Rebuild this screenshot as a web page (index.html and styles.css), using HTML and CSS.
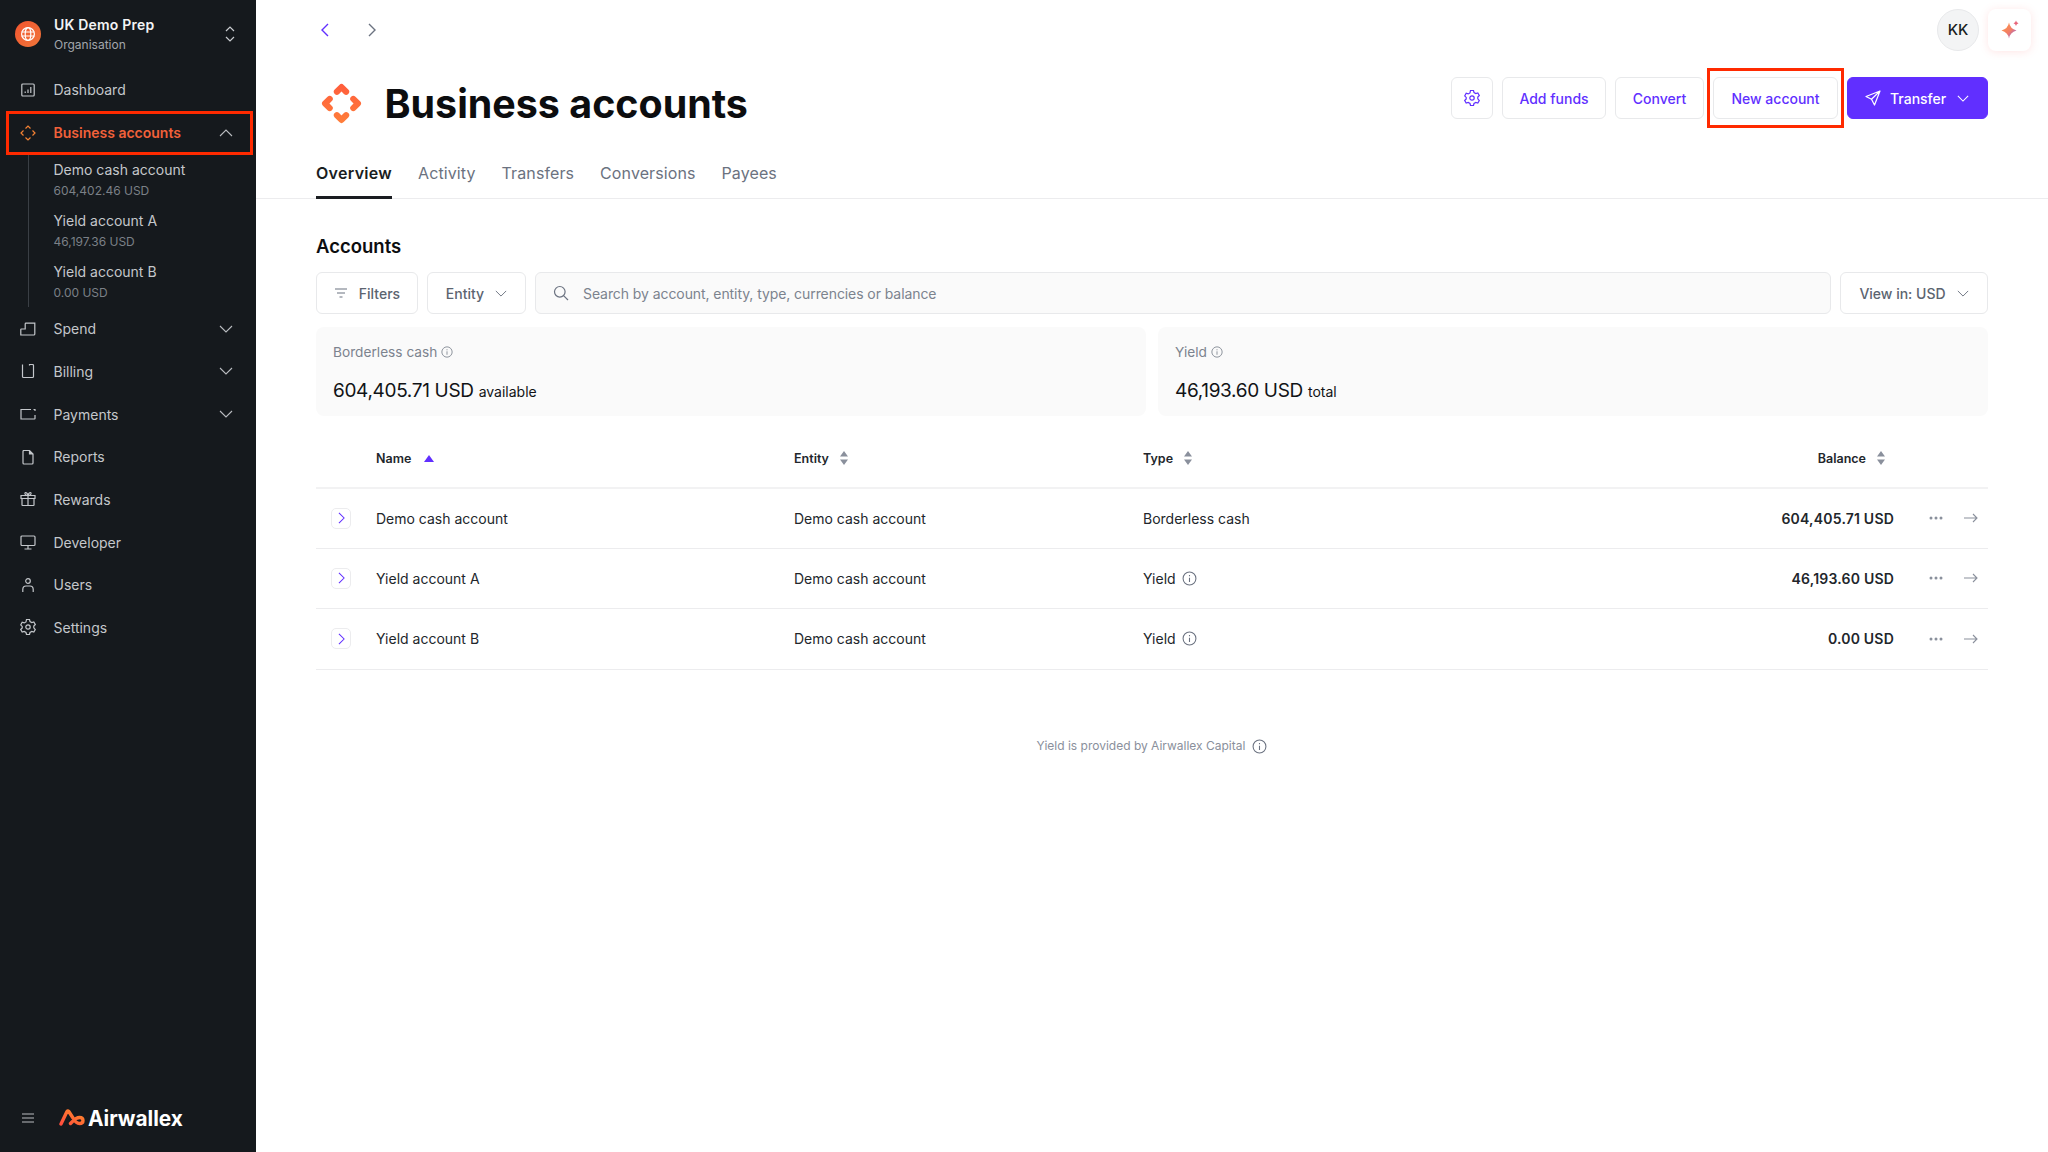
FILE: index.html
```html
<!DOCTYPE html>
<html lang="en">

<head>
  <meta charset="UTF-8">
  <title>Business accounts</title>
  <link rel="stylesheet" href="styles.css">
</head>

<body>
  <aside class="sidebar">
    <div class="org">
      <span class="org-avatar">
        <svg width="16" height="16" viewBox="0 0 16 16" fill="none" stroke="#fff" stroke-width="1.2"><circle cx="8" cy="8" r="6.4"/><ellipse cx="8" cy="8" rx="2.8" ry="6.4"/><path d="M1.6 6h12.8M1.6 10h12.8"/></svg>
      </span>
      <div class="org-text">
        <div class="org-name">UK Demo Prep</div>
        <div class="org-sub">Organisation</div>
      </div>
      <svg class="org-switch" width="12" height="18" viewBox="0 0 12 18" fill="none" stroke="#c9ccd0" stroke-width="1.2"><path d="M2 6l4-4 4 4M2 12l4 4 4-4"/></svg>
    </div>

    <nav class="nav">
      <a class="nav-item">
        <svg class="nav-icon" viewBox="0 0 16 16" fill="none" stroke="currentColor" stroke-width="1.2"><rect x="1.8" y="2" width="12.4" height="12" rx="1"/><path d="M5.2 11V9.500M8 11V7.500M10.800 11V5"/></svg>
        Dashboard
      </a>
      <a class="nav-item is-active is-boxed">
        <svg class="nav-icon" viewBox="0 0 16 16" fill="none" stroke="#f58233" stroke-width="1.2"><path d="M5.500 3.500L8 1l2.500 2.500M12.500 5.500L15 8l-2.500 2.500M10.500 12.500L8 15l-2.500-2.500M3.500 10.500L1 8l2.500-2.500"/></svg>
        Business accounts
        <svg class="nav-chevron" viewBox="0 0 14 8" fill="none" stroke="currentColor" stroke-width="1.1"><path d="M1 7l6-6 6 6"/></svg>
      </a>
      <div class="subnav">
        <a class="sub-item"><span class="sub-name">Demo cash account</span><span class="sub-value">604,402.46 USD</span></a>
        <a class="sub-item"><span class="sub-name">Yield account A</span><span class="sub-value">46,197.36 USD</span></a>
        <a class="sub-item"><span class="sub-name">Yield account B</span><span class="sub-value">0.00 USD</span></a>
      </div>
      <a class="nav-item">
        <svg class="nav-icon" viewBox="0 0 16 16" fill="none" stroke="currentColor" stroke-width="1.2"><path d="M.8 14V8.500q0-.5.5-.5h3.900V3q0-.8.8-.8h8.800V13q0 1-1 1z"/></svg>
        Spend
        <svg class="nav-chevron" viewBox="0 0 14 8" fill="none" stroke="currentColor" stroke-width="1.1"><path d="M1 1l6 6 6-6"/></svg>
      </a>
      <a class="nav-item">
        <svg class="nav-icon" viewBox="0 0 16 16" fill="none" stroke="currentColor" stroke-width="1.2"><path d="M2.500 1.500v12q0 1 1 1h9q1 0 1-1v-11q0-1-1-1h-3v1"/></svg>
        Billing
        <svg class="nav-chevron" viewBox="0 0 14 8" fill="none" stroke="currentColor" stroke-width="1.1"><path d="M1 1l6 6 6-6"/></svg>
      </a>
      <a class="nav-item">
        <svg class="nav-icon" viewBox="0 0 16 16" fill="none" stroke="currentColor" stroke-width="1.2"><path d="M15 5V3.500h-1.500M11 3.500H1v9.500h13.500q.5 0 .5-.5V9"/></svg>
        Payments
        <svg class="nav-chevron" viewBox="0 0 14 8" fill="none" stroke="currentColor" stroke-width="1.1"><path d="M1 1l6 6 6-6"/></svg>
      </a>
      <a class="nav-item">
        <svg class="nav-icon" viewBox="0 0 16 16" fill="none" stroke="currentColor" stroke-width="1.2"><path d="M3 1.500h6.500l3.500 3.500v9q0 1-1 1H4q-1 0-1-1V2.500q0-1 1-1z"/><path d="M9.500 1.500V5H13" fill="currentColor"/></svg>
        Reports
      </a>
      <a class="nav-item">
        <svg class="nav-icon" viewBox="0 0 16 16" fill="none" stroke="currentColor" stroke-width="1.2"><path d="M1 4.500h14v3H1zM2 7.500v6.500q0 .5.500.5h11q.5 0 .5-.5V7.500M8 4.500v10M8 4.500C6 4.500 4.500 3.500 5 2s3 .5 3 2.500zM8 4.500c2 0 3.500-1 3-2.500s-3 .5-3 2.500z"/></svg>
        Rewards
      </a>
      <a class="nav-item">
        <svg class="nav-icon" viewBox="0 0 16 16" fill="none" stroke="currentColor" stroke-width="1.2"><rect x="1" y="2" width="14" height="9.500" rx="1"/><path d="M8 11.500V15M4.500 15h7"/></svg>
        Developer
      </a>
      <a class="nav-item">
        <svg class="nav-icon" viewBox="0 0 16 16" fill="none" stroke="currentColor" stroke-width="1.2"><circle cx="8" cy="4" r="2.300"/><path d="M2.800 15v-2.500Q2.800 9 6 9h4q3.200 0 3.200 3.500V15"/></svg>
        Users
      </a>
      <a class="nav-item">
        <svg class="nav-icon" viewBox="0 0 16 16" fill="none" stroke="currentColor" stroke-width="1.2"><path d="M6.500 1h3l.5 2 1.800 1 2-.6 1.500 2.600-1.500 1.500v1.800L15.300 11l-1.500 2.600-2-.6-1.800 1-.5 2h-3l-.5-2-1.800-1-2 .6L.7 11l1.500-1.500V7.900L.7 6.400l1.500-2.600 2 .6L6 3.400z" transform="translate(0 -.5)"/><circle cx="8" cy="8" r="2.200"/></svg>
        Settings
      </a>
    </nav>

    <div class="sidebar-foot">
      <svg class="menu-icon" viewBox="0 0 12 10" fill="none" stroke="#b9bcc0" stroke-width="1.2"><path d="M0 1h12M0 5h12M0 9h12"/></svg>
      <svg class="brand-mark" viewBox="0 0 26 18" fill="none" stroke="url(#brand)" stroke-width="3.400" stroke-linejoin="round" stroke-linecap="round"><defs><linearGradient id="brand" x1="0" y1="1" x2="1" y2="0"><stop offset="0" stop-color="#ff4d3d"/><stop offset="1" stop-color="#ff8a2a"/></linearGradient></defs><path d="M2 15L8 2.500q.8-1 1.800 0L14 9q3 5.500 6.500 5.500 3.500 0 3.500-3 0-3-3.500-3-3.500 0-7 4l-2 2"/></svg>
      <span class="brand-name">Airwallex</span>
    </div>
  </aside>

  <main class="main">
    <div class="topbar">
      <div class="history">
        <svg viewBox="0 0 10 14" fill="none" stroke="#612fff" stroke-width="1.400"><path d="M8 1L2 7l6 6"/></svg>
        <svg viewBox="0 0 10 14" fill="none" stroke="#6b7280" stroke-width="1.400"><path d="M2 1l6 6-6 6"/></svg>
      </div>
      <div class="top-right">
        <span class="user-badge">KK</span>
        <span class="ai-button">
          <svg width="20" height="20" viewBox="0 0 20 20"><defs><linearGradient id="spark" x1="0" y1="0" x2="1" y2="1"><stop offset="0" stop-color="#ff9a3c"/><stop offset=".55" stop-color="#f27d68"/><stop offset="1" stop-color="#7a5cff"/></linearGradient></defs><path fill="url(#spark)" d="M9 2.500q1 6.200 7.500 8-6.500 1.800-7.500 8-1-6.200-7.500-8 6.500-1.800 7.500-8z"/><path fill="#e8647a" d="M16 .5q.4 2.200 2.500 2.700-2.100.5-2.500 2.800-.4-2.300-2.500-2.800 2.100-.5 2.500-2.700z"/></svg>
        </span>
      </div>
    </div>

    <header class="page-head">
      <svg class="page-icon" viewBox="0 0 40 40" fill="none" stroke="url(#head)" stroke-width="6" stroke-linejoin="round" stroke-linecap="round"><defs><linearGradient id="head" x1="0" y1="0" x2="0" y2="40" gradientUnits="userSpaceOnUse"><stop offset="0" stop-color="#ff5c3c"/><stop offset="1" stop-color="#ff7f3a"/></linearGradient></defs><path d="M15.500 8.500L20 4l4.500 4.500"/><path d="M15.500 31.500L20 36l4.500-4.500"/><path d="M8.500 15.500L4 20l4.500 4.500"/><path d="M31.500 15.500L36 20l-4.500 4.500"/></svg>
      <h1 class="page-title">Business accounts</h1>
      <div class="page-actions">
        <button class="btn btn-icon"><svg width="16" height="16" viewBox="0 0 16 16" fill="none" stroke="currentColor" stroke-width="1.200"><path d="M6.500 1h3l.5 2 1.800 1 2-.6 1.500 2.600-1.500 1.500v1.800L15.300 11l-1.500 2.600-2-.6-1.800 1-.5 2h-3l-.5-2-1.800-1-2 .6L.7 11l1.500-1.500V7.900L.7 6.400l1.500-2.600 2 .6L6 3.400z" transform="translate(0 -.5)"/><circle cx="8" cy="8" r="2.200"/></svg></button>
        <button class="btn btn-funds">Add funds</button>
        <button class="btn btn-convert">Convert</button>
        <button class="btn btn-new is-boxed">New account</button>
        <button class="btn btn-primary">
          <svg width="16" height="16" viewBox="0 0 16 16" fill="none" stroke="#fff" stroke-width="1.200" stroke-linejoin="round"><path d="M15 1L1 6.500l5.500 2.800L9.500 15zM15 1L6.500 9.300"/></svg>
          Transfer
          <svg class="btn-chevron" viewBox="0 0 14 8" fill="none" stroke="#fff" stroke-width="1.200"><path d="M1 1l6 6 6-6"/></svg>
        </button>
      </div>
    </header>

    <div class="tabs">
      <a class="tab is-current">Overview</a>
      <a class="tab">Activity</a>
      <a class="tab">Transfers</a>
      <a class="tab">Conversions</a>
      <a class="tab">Payees</a>
    </div>

    <section class="content">
      <h2 class="section-title">Accounts</h2>

      <div class="filters">
        <button class="filter filter-btn">
          <svg width="14" height="12" viewBox="0 0 14 12" fill="none" stroke="#6b7280" stroke-width="1.200"><path d="M1 2h12M3 6h8M5.500 10h3"/></svg>
          Filters
        </button>
        <button class="filter entity-btn">
          Entity
          <svg class="btn-chevron" viewBox="0 0 14 8" fill="none" stroke="#6b7280" stroke-width="1.100"><path d="M1 1l6 6 6-6"/></svg>
        </button>
        <div class="search">
          <svg width="16" height="16" viewBox="0 0 16 16" fill="none" stroke="#6b7280" stroke-width="1.200"><circle cx="6.800" cy="6.800" r="5.300"/><path d="M10.800 10.800L15 15"/></svg>
          Search by account, entity, type, currencies or balance
        </div>
        <button class="filter view-btn">
          View in: USD
          <svg class="btn-chevron" viewBox="0 0 14 8" fill="none" stroke="#6b7280" stroke-width="1.100"><path d="M1 1l6 6 6-6"/></svg>
        </button>
      </div>

      <div class="summary">
        <div class="summary-card">
          <div class="summary-label">Borderless cash
            <svg class="info" viewBox="0 0 14 14" fill="none" stroke="currentColor" stroke-width="1"><circle cx="7" cy="7" r="6"/><path d="M7 6.200v4M7 3.800v1.200"/></svg>
          </div>
          <div class="summary-value">604,405.71 USD <small>available</small></div>
        </div>
        <div class="summary-card">
          <div class="summary-label">Yield
            <svg class="info" viewBox="0 0 14 14" fill="none" stroke="currentColor" stroke-width="1"><circle cx="7" cy="7" r="6"/><path d="M7 6.200v4M7 3.800v1.200"/></svg>
          </div>
          <div class="summary-value">46,193.60 USD <small>total</small></div>
        </div>
      </div>

      <div class="table">
        <div class="row row-head">
          <span></span>
          <span class="th">Name <svg class="sort-up" viewBox="0 0 10 7"><path fill="#612fff" d="M5 0l5 7H0z"/></svg></span>
          <span class="th">Entity <svg class="sort" viewBox="0 0 8 14"><path fill="#8a909c" d="M4 0l4 5.500H0zM4 14L0 8.500h8z"/></svg></span>
          <span class="th">Type <svg class="sort" viewBox="0 0 8 14"><path fill="#8a909c" d="M4 0l4 5.500H0zM4 14L0 8.500h8z"/></svg></span>
          <span class="th th-balance">Balance <svg class="sort" viewBox="0 0 8 14"><path fill="#8a909c" d="M4 0l4 5.500H0zM4 14L0 8.500h8z"/></svg></span>
        </div>

        <div class="row">
          <span class="expand"><svg viewBox="0 0 8 14" fill="none" stroke="#612fff" stroke-width="1.200"><path d="M1 1l6 6-6 6"/></svg></span>
          <span>Demo cash account</span>
          <span>Demo cash account</span>
          <span>Borderless cash</span>
          <span class="balance">604,405.71 USD</span>
          <span class="row-actions">
            <svg class="dots" viewBox="0 0 14 4"><circle cx="2" cy="2" r="1.500"/><circle cx="7" cy="2" r="1.500"/><circle cx="12" cy="2" r="1.500"/></svg>
            <svg class="arrow" viewBox="0 0 14 10" fill="none" stroke="#8a909c" stroke-width="1.100"><path d="M0 5h13M9 1l4 4-4 4"/></svg>
          </span>
        </div>

        <div class="row">
          <span class="expand"><svg viewBox="0 0 8 14" fill="none" stroke="#612fff" stroke-width="1.200"><path d="M1 1l6 6-6 6"/></svg></span>
          <span>Yield account A</span>
          <span>Demo cash account</span>
          <span class="cell-info">Yield <svg class="info-lg" viewBox="0 0 14 14" fill="none" stroke="currentColor" stroke-width="1"><circle cx="7" cy="7" r="6"/><path d="M7 6.200v4M7 3.800v1.200"/></svg></span>
          <span class="balance">46,193.60 USD</span>
          <span class="row-actions">
            <svg class="dots" viewBox="0 0 14 4"><circle cx="2" cy="2" r="1.500"/><circle cx="7" cy="2" r="1.500"/><circle cx="12" cy="2" r="1.500"/></svg>
            <svg class="arrow" viewBox="0 0 14 10" fill="none" stroke="#8a909c" stroke-width="1.100"><path d="M0 5h13M9 1l4 4-4 4"/></svg>
          </span>
        </div>

        <div class="row">
          <span class="expand"><svg viewBox="0 0 8 14" fill="none" stroke="#612fff" stroke-width="1.200"><path d="M1 1l6 6-6 6"/></svg></span>
          <span>Yield account B</span>
          <span>Demo cash account</span>
          <span class="cell-info">Yield <svg class="info-lg" viewBox="0 0 14 14" fill="none" stroke="currentColor" stroke-width="1"><circle cx="7" cy="7" r="6"/><path d="M7 6.200v4M7 3.800v1.200"/></svg></span>
          <span class="balance">0.00 USD</span>
          <span class="row-actions">
            <svg class="dots" viewBox="0 0 14 4"><circle cx="2" cy="2" r="1.500"/><circle cx="7" cy="2" r="1.500"/><circle cx="12" cy="2" r="1.500"/></svg>
            <svg class="arrow" viewBox="0 0 14 10" fill="none" stroke="#8a909c" stroke-width="1.100"><path d="M0 5h13M9 1l4 4-4 4"/></svg>
          </span>
        </div>
      </div>

      <p class="note">Yield is provided by Airwallex Capital
        <svg class="info-lg" viewBox="0 0 14 14" fill="none" stroke="#6b7280" stroke-width="1"><circle cx="7" cy="7" r="6"/><path d="M7 6.200v4M7 3.800v1.200"/></svg>
      </p>
    </section>
  </main>
</body>

</html>
```

FILE: styles.css
```css
/* page */
* {
  box-sizing: border-box;
}

body {
  margin: 0;
  height: 100vh;
  display: flex;
  overflow: hidden;
  background-color: #fff;
  color: #1a1d21;
  font-family: Inter, "Liberation Sans", sans-serif;
  font-size: 14px;
}

/* sidebar */
.sidebar {
  width: 256px;
  flex: none;
  display: flex;
  flex-direction: column;
  background-color: #15191d;
  color: #c4c7cb;
}

.org {
  height: 68.67px;
  display: flex;
  align-items: center;
  padding-left: 15px;
  padding-right: 20px;
}

.org-avatar {
  width: 26px;
  height: 26px;
  border-radius: 50%;
  flex: none;
  display: flex;
  align-items: center;
  justify-content: center;
  background: linear-gradient(135deg, #f2552f, #f0763a);
}

.org-text {
  margin-left: 13px;
  padding-top: 2px;
  flex: 1;
}

.org-name {
  color: #f2f3f4;
  font-weight: 600;
  line-height: 20px;
  letter-spacing: 0.2px;
}

.org-sub {
  color: #a2a6ab;
  font-size: 12px;
  line-height: 20px;
}

.nav-item {
  position: relative;
  height: 42.67px;
  display: flex;
  align-items: center;
  padding-left: 20px;
  padding-right: 23px;
}

.nav-icon {
  width: 16px;
  height: 16px;
  margin-right: 17.5px;
  flex: none;
}

.nav-chevron {
  width: 14px;
  height: 8px;
  margin-left: auto;
  color: #b9bcc0;
}

.is-active {
  color: #f2613a;
  font-weight: 600;
}

.is-boxed::after {
  content: "";
  position: absolute;
  top: 0;
  right: 3px;
  bottom: -1px;
  left: 6px;
  border: 3px solid #ff2a00;
}

.subnav {
  height: 153.5px;
  margin-left: 28px;
  padding-left: 24.5px;
  border-left: 1px solid #3a3f45;
}

.sub-item {
  height: 51px;
  padding-top: 2px;
  display: flex;
  flex-direction: column;
  justify-content: center;
}

.sub-name {
  line-height: 20px;
}

.sub-value {
  font-size: 12px;
  line-height: 21px;
  color: #7b8087;
}

.sidebar-foot {
  margin-top: auto;
  height: 68px;
  display: flex;
  align-items: center;
  padding-left: 22px;
}

.menu-icon {
  width: 12px;
  height: 10px;
  margin-right: 25px;
}

.brand-mark {
  width: 26px;
  height: 18px;
  margin-right: 3px;
}

.brand-name {
  color: #fff;
  font-size: 20.8px;
  font-weight: 700;
}

/* top area */
.main {
  flex: 1;
  min-width: 0;
}

.topbar {
  height: 59px;
  display: flex;
  align-items: center;
  justify-content: space-between;
  padding-left: 64px;
  padding-right: 17px;
}

.history {
  display: flex;
  gap: 37px;
}

.history svg {
  width: 10px;
  height: 14px;
}

.top-right {
  display: flex;
  gap: 9px;
}

.user-badge {
  width: 42px;
  height: 42px;
  border-radius: 50%;
  display: flex;
  align-items: center;
  justify-content: center;
  background-color: #f3f4f5;
  border: 1px solid #e8e9eb;
  font-size: 15px;
  font-weight: 500;
}

.ai-button {
  width: 43px;
  height: 42px;
  border-radius: 8px;
  display: flex;
  align-items: center;
  justify-content: center;
  background-color: #fff;
  box-shadow: 0 1px 8px rgba(255, 110, 110, 0.18);
}

.page-head {
  height: 66px;
  display: flex;
  align-items: center;
  padding-left: 65px;
  padding-right: 60px;
}

.page-icon {
  width: 41px;
  height: 41px;
  margin-right: 22.5px;
  margin-top: 22px;
}

.page-title {
  margin: 24px 0 0;
  font-size: 39.4px;
  font-weight: 700;
  color: #0c0d0f;
}

.page-actions {
  margin-left: auto;
  margin-top: 12px;
  display: flex;
  gap: 9px;
}

.btn {
  position: relative;
  height: 42px;
  display: flex;
  align-items: center;
  justify-content: center;
  border: 1px solid #e8e9eb;
  border-radius: 6px;
  background-color: #fff;
  color: #612fff;
  font-family: inherit;
  font-size: 14px;
  font-weight: 500;
  padding: 0;
}

.btn-icon {
  width: 42px;
}

.btn-funds {
  width: 104px;
}

.btn-convert {
  width: 89px;
}

.btn-new {
  width: 125px;
}

.btn-new::after {
  top: -10px;
  right: -7px;
  bottom: -10px;
  left: -7px;
}

.btn-primary {
  width: 141px;
  justify-content: flex-start;
  padding-left: 17px;
  gap: 9px;
  background-color: #612fff;
  border-color: #612fff;
  color: #fff;
}

.btn-chevron {
  width: 12px;
  height: 7px;
  margin-left: 2px;
}

.tabs {
  height: 74px;
  display: flex;
  gap: 26px;
  padding-left: 60px;
  border-bottom: 1px solid #ececee;
}

.tab {
  height: 74px;
  padding-top: 36px;
  font-size: 16px;
  line-height: 24px;
  color: #6b7280;
  letter-spacing: 0.1px;
}

.is-current {
  color: #1a1d21;
  font-weight: 600;
  letter-spacing: 0.3px;
  border-bottom: 3px solid #1a1d21;
}

/* accounts */
.content {
  padding: 0 60px;
}

.section-title {
  margin: 33px 0 12px;
  font-size: 18.5px;
  line-height: 28px;
  font-weight: 600;
  color: #0c0d0f;
}

.filters {
  display: flex;
  gap: 9px;
  height: 42px;
}

.filter {
  height: 42px;
  display: flex;
  align-items: center;
  justify-content: center;
  padding: 0;
  border: 1px solid #e8e9eb;
  border-radius: 6px;
  background-color: #fff;
  color: #5c6470;
  font-family: inherit;
  font-size: 14px;
  font-weight: 500;
}

.filter-btn {
  width: 102px;
  gap: 11px;
}

.entity-btn {
  width: 99px;
  gap: 9px;
}

.view-btn {
  width: 148px;
  gap: 9px;
}

.search {
  flex: 1;
  display: flex;
  align-items: center;
  gap: 14px;
  padding-left: 17px;
  background-color: #fafafa;
  border: 1px solid #e8e9eb;
  border-radius: 6px;
  color: #7c838e;
  letter-spacing: -0.08px;
}

.summary {
  margin-top: 13px;
  display: grid;
  grid-template-columns: 1fr 1fr;
  gap: 12px;
}

.summary-card {
  height: 89px;
  padding: 15px 17px;
  background-color: #fafafa;
  border-radius: 8px;
}

.summary-label {
  display: flex;
  align-items: center;
  gap: 4px;
  font-size: 13.7px;
  line-height: 20px;
  color: #7c838e;
}

.info {
  width: 12px;
  height: 12px;
}

.summary-value {
  margin-top: 15px;
  font-size: 19px;
  letter-spacing: -0.33px;
  line-height: 28px;
  color: #111316;
}

.summary-value small {
  font-size: 14px;
  letter-spacing: 0;
}

/* table */
.table {
  margin-top: 14px;
}

.row {
  display: grid;
  grid-template-columns: 60px 418px 349px 1fr 320px 94px;
  align-items: center;
  height: 60px;
  border-bottom: 1px solid #ececee;
  color: #22262b;
}

.row:last-child {
  height: 61px;
}

.row-head {
  height: 58.5px;
  border-bottom: 2px solid #f2f2f3;
}

.th {
  display: flex;
  align-items: center;
  gap: 11px;
  font-size: 12.5px;
  font-weight: 600;
}

.th-balance {
  justify-content: flex-end;
  padding-right: 9px;
}

.sort-up {
  width: 10px;
  height: 7px;
  margin-left: 2px;
}

.sort {
  width: 8px;
  height: 14px;
}

.expand {
  width: 20px;
  height: 21px;
  margin-left: 15px;
  display: flex;
  align-items: center;
  justify-content: center;
  border: 1px solid #ececee;
  border-radius: 5px;
}

.expand svg {
  width: 7px;
  height: 12px;
}

.cell-info {
  display: flex;
  align-items: center;
  gap: 6px;
}

.info-lg {
  width: 15px;
  height: 15px;
  color: #6b7280;
}

.balance {
  text-align: right;
  font-weight: 600;
  letter-spacing: 0.2px;
}

.row-actions {
  display: flex;
  align-items: center;
  justify-content: flex-end;
  padding-right: 10px;
  gap: 21px;
}

.dots {
  width: 14px;
  height: 4px;
  fill: #8a909c;
}

.arrow {
  width: 14px;
  height: 10px;
}

.note {
  display: flex;
  justify-content: center;
  align-items: center;
  gap: 7px;
  margin: 66.5px 0 0;
  font-size: 12px;
  line-height: 20px;
  color: #8a909c;
}
```
